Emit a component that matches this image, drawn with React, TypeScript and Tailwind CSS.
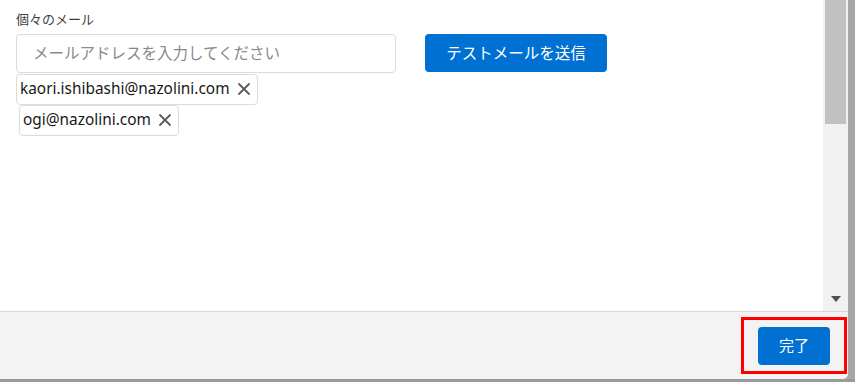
import React from "react";

const jp = { fontFamily: '"Noto Sans CJK JP", "Noto Sans", sans-serif' };
const latin = { fontFamily: '"Noto Sans", "Noto Sans CJK JP", sans-serif' };

const EmailPill: React.FC<{ email: string; className?: string }> = ({ email, className = "" }) => (
  <div
    className={`inline-flex h-[31px] items-center gap-[7px] rounded-[4px] border border-[#dddbda] bg-white pl-[3px] pr-[6px] text-[15.4px] text-[#181818] ${className}`}
    style={latin}
  >
    <span>{email}</span>
    <svg width="14" height="14" viewBox="0 0 14 14" className="text-[#5b5b5b]">
      <path d="M2 2 L12 12 M12 2 L2 12" stroke="currentColor" strokeWidth="1.8" strokeLinecap="round" />
    </svg>
  </div>
);

export default function App() {
  const emails = ["kaori.ishibashi@nazolini.com", "ogi@nazolini.com"];

  return (
    <div className="flex h-[382px] w-[855px] flex-col overflow-hidden bg-[#a6a6a6]">
      <div className="flex h-[379px] w-[848px] flex-col">
        {/* body */}
        <div className="flex h-[311px] bg-white">
          <div className="flex-1 pl-[16px] pt-[9px]">
            <div className="text-[13px] text-[#3e3e3c]" style={jp}>
              個々のメール
            </div>
            <div className="mt-[5px] flex items-center">
              <div
                className="flex h-[39px] w-[380px] items-center rounded-[4px] border border-[#dddbda] pl-[16px] text-[15.5px] text-[#8a8a8a]"
                style={jp}
              >
                メールアドレスを入力してください
              </div>
              <button
                className="ml-[29px] h-[38px] w-[182px] rounded-[4px] bg-[#0070d2] text-[15.5px] text-white"
                style={jp}
              >
                テストメールを送信
              </button>
            </div>
            <div className="mt-[1px] flex flex-col items-start">
              <EmailPill email={emails[0]} />
              <EmailPill email={emails[1]} className="ml-[3px]" />
            </div>
          </div>
          {/* scrollbar */}
          <div className="flex w-[25px] flex-col bg-[#f1f1f1] px-[2px]">
            <div className="h-[124px] bg-[#c1c1c1]" />
            <div className="flex-1" />
            <div className="flex h-[24px] items-start justify-center pt-[9px]">
              <svg width="10" height="6" viewBox="0 0 10 6">
                <path d="M0 0 H10 L5 6 Z" fill="#505050" />
              </svg>
            </div>
          </div>
        </div>
        {/* footer */}
        <div className="flex flex-1 items-center justify-end rounded-br-[5px] border-t border-[#d8d8d8] bg-[#f3f3f3] pr-[1px]">
          <div className="flex h-[57px] w-[106px] items-center justify-center border-[3px] border-[#ff0000]">
            <button
              className="h-[38px] w-[72px] rounded-[4px] bg-[#0070d2] text-[15px] text-white"
              style={jp}
            >
              完了
            </button>
          </div>
        </div>
      </div>
      <div className="flex-1 bg-[#9a9a9a]" />
    </div>
  );
}
